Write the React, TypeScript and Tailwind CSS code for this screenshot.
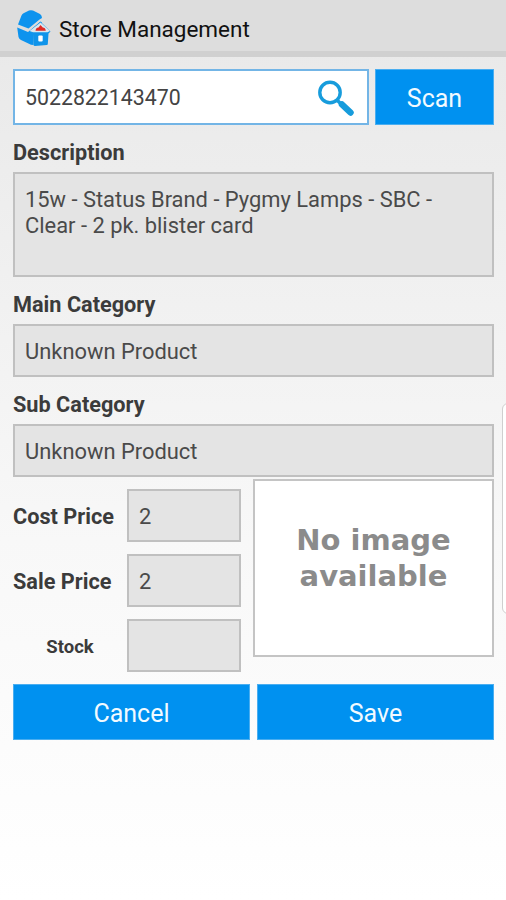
import type { ReactNode } from "react";

function StoreLogo() {
  return (
    <svg width="35" height="38" viewBox="0 0 35 38" className="shrink-0">
      <path
        d="M2 15.500 L5.500 6.500 Q6.200 4.800 8 4 L13 1.500 Q15 0.800 17 1.600 L24 5 Q26 6.500 26 9 L23.500 10.500 L12.500 19.500 Z"
        fill="#0d93ee"
      />
      <path
        d="M1.200 18.500 L12 23 L24.500 12.500 L26 13.500 L14.500 22.500 L17.500 24.500 L17.500 36 L15 35.800 L5 31 Q3 30 2.500 28 Z"
        fill="#0d93ee"
      />
      <path
        d="M13 22.500 L24.500 12.800 L34.500 22.500 L32.500 24.500 L31.800 35 Q31.800 36 30.800 36 L19 37 Q17.500 37 17.500 35.700 L17 24.500 Z"
        fill="#0f94ea"
      />
      <path d="M13.500 22 L24.500 13.500 L34 22 L31.500 23.200 L17 23.200 Z" fill="#dbe7ee" />
      <path
        d="M19.500 21.800 Q20 18.500 22.500 18.500 L24.500 16 L26.800 18.500 Q29.300 18.500 29.800 21.800 Z"
        fill="#e02b25"
      />
      <rect x="22.300" y="26.500" width="4.400" height="6" rx="1" fill="#fff" />
    </svg>
  );
}

function SearchIcon() {
  return (
    <svg width="38" height="38" viewBox="0 0 38 38" fill="none" stroke="#179cdc">
      <circle cx="13" cy="13.500" r="10.200" strokeWidth="3.400" />
      <path d="M20 21 L24.500 25.500" strokeWidth="3.500" />
      <path d="M25 25.500 L33.500 33.500" strokeWidth="6.500" strokeLinecap="round" />
    </svg>
  );
}

function Label({ children }: { children: ReactNode }) {
  return (
    <div className="h-[47px] pt-[15px] text-[21.700px] leading-[26px] font-bold text-[#3b3b3b]">
      {children}
    </div>
  );
}

function Field({ children }: { children?: ReactNode }) {
  return (
    <div className="flex h-[53px] items-center border-2 border-[#c0c0c0] bg-[#e4e4e4] pt-1 pl-2.5 text-[21.900px] text-[#4a4a4a]">
      {children}
    </div>
  );
}

function BlueButton({ children }: { children: ReactNode }) {
  return (
    <button className="h-14 w-full border border-[#4aaef0] bg-[#0091f0] pt-[3px] text-[25px] text-[#f2faff]">
      {children}
    </button>
  );
}

export default function App() {
  return (
    <div className="relative h-[900px] w-[506px] overflow-hidden bg-linear-to-b from-[#e8e8e8] via-[#f8f8f8] via-60% to-white font-['Roboto',sans-serif]">
      <header className="flex h-[57px] items-center border-b-[6px] border-[#d0d0d0] bg-[#dddddd] pt-1 pl-4">
        <StoreLogo />
        <h1 className="ml-2 pt-1 text-[22.500px] text-[#111]">Store Management</h1>
      </header>

      <main className="pt-3 pr-3 pl-[13px]">
        <div className="grid grid-cols-[356px_119px] gap-[6px]">
          <div className="flex h-14 items-center justify-between border-2 border-[#73b5e6] bg-white pt-px pr-3 pl-2.5 text-[21.300px] text-[#444]">
            5022822143470
            <SearchIcon />
          </div>
          <BlueButton>Scan</BlueButton>
        </div>

        <Label>Description</Label>
        <div className="h-[105px] border-2 border-[#c0c0c0] bg-[#e4e4e4] px-2.5 pt-[13px] text-[21.900px] leading-[26px] text-[#4a4a4a]">
          15w - Status Brand - Pygmy Lamps - SBC -
          <br />
          Clear - 2 pk. blister card
        </div>

        <Label>Main Category</Label>
        <Field>Unknown Product</Field>

        <Label>Sub Category</Label>
        <Field>Unknown Product</Field>

        <div className="flex justify-between">
          <div className="grid grid-cols-[114px_114px] items-center gap-y-3 pt-3 text-[#3b3b3b]">
            <span className="pt-1 text-[21.700px] font-bold">Cost Price</span>
            <Field>2</Field>
            <span className="pt-1 text-[21.700px] font-bold">Sale Price</span>
            <Field>2</Field>
            <span className="pt-1 text-center text-[18.500px] font-bold">Stock</span>
            <Field />
          </div>
          <div className="mt-[2px] h-[178px] w-[241px] border-2 border-[#c4c4c4] bg-white pt-[41px] text-center font-['DejaVu_Sans',sans-serif] text-[29px] leading-[36px] font-bold text-[#8b8b8b]">
            No image
            <br />
            available
          </div>
        </div>

        <div className="mt-3 grid grid-cols-2 gap-[7px]">
          <BlueButton>Cancel</BlueButton>
          <BlueButton>Save</BlueButton>
        </div>
      </main>

      {/* edge panel handle */}
      <div className="absolute top-[403px] -right-2 h-[211px] w-3 rounded-md border border-[#cfcfcf] bg-white" />
    </div>
  );
}
